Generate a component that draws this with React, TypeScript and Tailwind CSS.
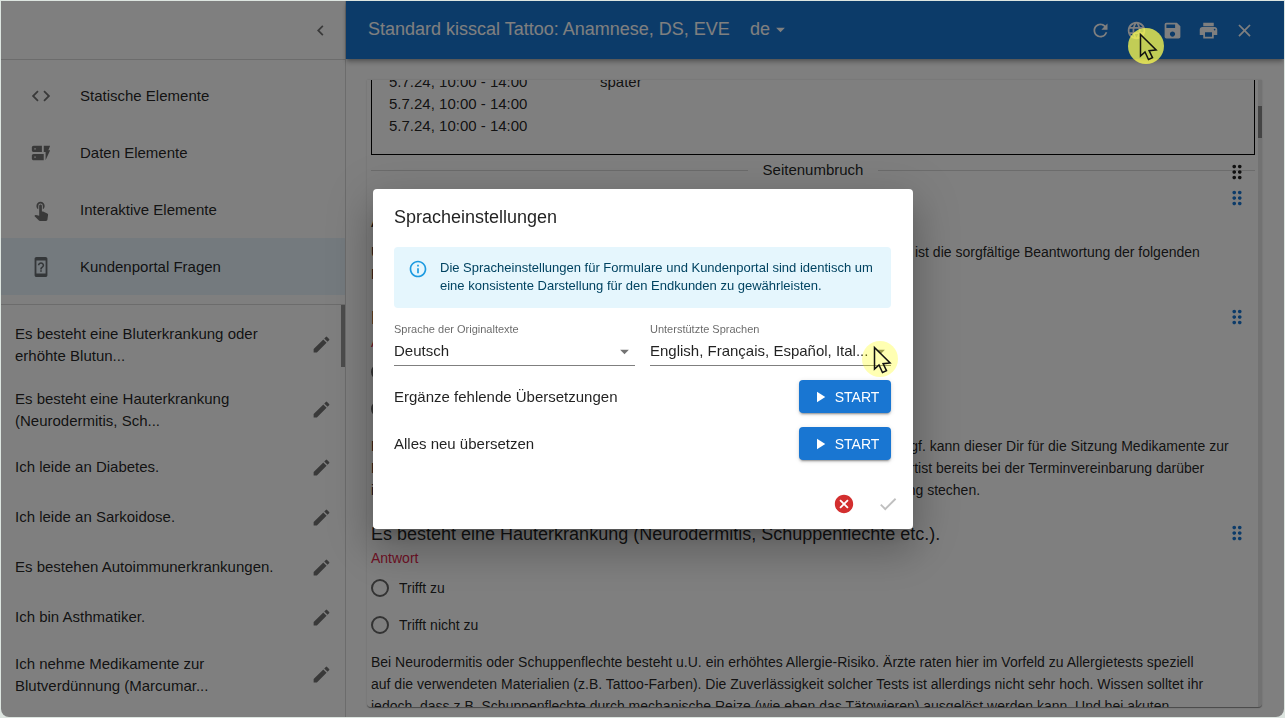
import { ReactNode } from "react";
import {
  MdArrowDropDown,
  MdCancel,
  MdCheck,
  MdChevronLeft,
  MdClose,
  MdCode,
  MdDeviceUnknown,
  MdDragIndicator,
  MdDynamicForm,
  MdEdit,
  MdInfoOutline,
  MdLanguage,
  MdPlayArrow,
  MdPrint,
  MdRefresh,
  MdSave,
  MdTouchApp,
} from "react-icons/md";

const NAV = [
  { label: "Statische Elemente", icon: MdCode },
  { label: "Daten Elemente", icon: MdDynamicForm },
  { label: "Interaktive Elemente", icon: MdTouchApp },
  { label: "Kundenportal Fragen", icon: MdDeviceUnknown, active: true },
];

const QUESTIONS = [
  "Es besteht eine Bluterkrankung oder erhöhte Blutun...",
  "Es besteht eine Hauterkrankung (Neurodermitis, Sch...",
  "Ich leide an Diabetes.",
  "Ich leide an Sarkoidose.",
  "Es bestehen Autoimmunerkrankungen.",
  "Ich bin Asthmatiker.",
  "Ich nehme Medikamente zur Blutverdünnung (Marcumar...",
];

function Pointer({ className }: { className: string }) {
  return (
    <span className={`pointer-events-none absolute z-30 size-9 rounded-full ${className}`}>
      <svg viewBox="0 0 36 36" className="size-9 overflow-visible" fill="none" stroke="#111" strokeWidth="1.5">
        <path d="M12.5 6.5v21.5l4.5-4 3.5 7.5 4-1.8-3.4-7 7-.7z" />
      </svg>
    </span>
  );
}

function Sidebar() {
  return (
    <aside className="flex w-[345px] shrink-0 flex-col border-r border-black/15">
      <div className="flex h-[59px] shrink-0 items-center justify-end border-b border-black/15 pr-3.5">
        <button aria-label="Einklappen" className="text-black/55">
          <MdChevronLeft size={21} />
        </button>
      </div>
      <nav className="shrink-0 border-b border-black/15 pt-[7px] pb-[9px]">
        {NAV.map(({ label, icon: Icon, active }) => (
          <a
            key={label}
            href="#"
            className={`flex h-[57px] items-center gap-7 pl-[29px] ${active ? "bg-[#e8f4fd]" : ""}`}
          >
            <Icon size={22} className="text-black/55" />
            {label}
          </a>
        ))}
      </nav>
      <div className="flex min-h-0 flex-1">
        <ul className="min-w-0 flex-1 overflow-hidden pt-[7px]">
          {QUESTIONS.map((q, i) => (
            <li
              key={q}
              className={`flex items-center justify-between pr-[9px] pl-3.5 ${q.length > 40 ? "h-[65px]" : "h-[50px]"}`}
            >
              <span className="w-[265px]">{q}</span>
              <button aria-label={`Frage ${i + 1} bearbeiten`} className="text-black/55">
                <MdEdit size={21} />
              </button>
            </li>
          ))}
        </ul>
        <div className="w-1">
          <div className="h-[62px] bg-black/40" />
        </div>
      </div>
    </aside>
  );
}

function Header() {
  return (
    <header className="relative flex h-[58px] shrink-0 items-center bg-[#1976d2] pr-[22px] pl-[22px] text-white shadow-[0_2px_4px_-1px_rgba(0,0,0,0.3),0_4px_5px_rgba(0,0,0,0.16)]">
      <h1 className="pb-0.5 text-lg font-medium">Standard kisscal Tattoo: Anamnese, DS, EVE</h1>
      <button className="ml-5 flex items-center pb-0.5 text-lg font-medium">
        de <MdArrowDropDown size={21} />
      </button>
      <div className="ml-auto flex">
        <button aria-label="Neu laden" className="flex size-9 items-center justify-center">
          <MdRefresh size={21} />
        </button>
        <button aria-label="Sprache" className="relative flex size-9 items-center justify-center">
          <MdLanguage size={21} />
          <Pointer className="top-4 left-2.5 bg-[#ffff50]/75" />
        </button>
        <button aria-label="Speichern" className="flex size-9 items-center justify-center">
          <MdSave size={21} />
        </button>
        <button aria-label="Drucken" className="flex size-9 items-center justify-center">
          <MdPrint size={21} />
        </button>
        <button aria-label="Schließen" className="flex size-9 items-center justify-center">
          <MdClose size={21} />
        </button>
      </div>
    </header>
  );
}

function DragHandle({ className }: { className: string }) {
  return (
    <button aria-label="Verschieben" className={`absolute right-[7px] ${className}`}>
      <MdDragIndicator size={22} />
    </button>
  );
}

function Question({ name, title, children }: { name: string; title: string; children: ReactNode }) {
  return (
    <section className="relative mb-5">
      <DragHandle className="top-px text-[#1976d2]" />
      <h2 className="text-lg leading-[26px]">{title}</h2>
      <fieldset className="text-sm leading-[22px]">
        <legend className="text-[#e0264b]">Antwort</legend>
        {["Trifft zu", "Trifft nicht zu"].map((option) => (
          <label key={option} className="flex h-[37px] items-center gap-2.5">
            <input
              type="radio"
              name={name}
              className="size-[18px] appearance-none rounded-full border-2 border-black/60"
            />
            {option}
          </label>
        ))}
      </fieldset>
      <p className="mt-2 text-sm leading-[22px] whitespace-nowrap">{children}</p>
    </section>
  );
}

function FormPreview() {
  return (
    <main className="flex min-h-0 flex-1 pt-[21px] pr-[22px] pb-[9px] pl-[21px]">
      <div className="flex min-w-0 flex-1 overflow-hidden rounded-b border-b border-black/40 shadow-[0_0_2px_rgba(0,0,0,0.2)]">
        <div className="min-w-0 flex-1 overflow-hidden pr-[3px] pl-1">
          <div className="-mt-2.5 grid grid-cols-[211px_1fr] border border-black pb-[17px] pl-[17px]">
            <div>
              <p>5.7.24, 10:00 - 14:00</p>
              <p>5.7.24, 10:00 - 14:00</p>
              <p>5.7.24, 10:00 - 14:00</p>
            </div>
            <p>später</p>
          </div>
          <div className="relative flex h-[30px] items-center gap-[15px]">
            <div className="h-px flex-1 bg-black/15" />
            Seitenumbruch
            <div className="h-px flex-1 bg-black/15" />
            <DragHandle className="top-1.5" />
          </div>
          <section className="relative mb-5 pt-[23px]">
            <DragHandle className="top-0.5 text-[#1976d2]" />
            <h2 className="text-lg leading-[26px]">Anamnese</h2>
            <p className="mt-[7px] text-sm leading-[22px] whitespace-nowrap">
              Um Deine Gesundheit zu schützen und jedes Risiko bei der Behandlung zu vermeiden, ist die sorgfältige
              Beantwortung der folgenden
              <br />
              Fragen erforderlich.
            </p>
          </section>
          <Question name="blut" title="Es besteht eine Bluterkrankung oder erhöhte Blutungsneigung.">
            Bitte besprich Dein Vorhaben unbedingt vorab immer mit Deinem behandelnden Arzt, ggf. kann dieser Dir für
            die Sitzung Medikamente zur
            <br />
            Blutgerinnung verschreiben. In jedem Falle solltest Du immer unbedingt auch Deinen Artist bereits bei der
            Terminvereinbarung darüber
            <br />
            informieren. Ohne diese Freigaben können wir Dir sonst leider keine weitere Tätowierung stechen.
          </Question>
          <Question name="haut" title="Es besteht eine Hauterkrankung (Neurodermitis, Schuppenflechte etc.).">
            Bei Neurodermitis oder Schuppenflechte besteht u.U. ein erhöhtes Allergie-Risiko. Ärzte raten hier im
            Vorfeld zu Allergietests speziell
            <br />
            auf die verwendeten Materialien (z.B. Tattoo-Farben). Die Zuverlässigkeit solcher Tests ist allerdings
            nicht sehr hoch. Wissen solltet ihr
            <br />
            jedoch, dass z.B. Schuppenflechte durch mechanische Reize (wie eben das Tätowieren) ausgelöst werden
            kann. Und bei akuten
          </Question>
        </div>
        <div className="w-1 bg-black/10 pt-[26px]">
          <div className="h-8 bg-black/40" />
        </div>
      </div>
    </main>
  );
}

function SelectField({ id, label, value, children }: { id: string; label: string; value: string; children?: ReactNode }) {
  return (
    <div className="relative min-w-0 flex-1">
      <label htmlFor={id} className="block text-[11px] leading-4 text-black/60">
        {label}
      </label>
      <div className="flex items-center border-b border-black/50">
        <select id={id} className="h-7 min-w-0 flex-1 appearance-none truncate">
          <option>{value}</option>
        </select>
        <MdArrowDropDown size={21} className="shrink-0 text-black/55" />
      </div>
      {children}
    </div>
  );
}

function StartRow({ label }: { label: string }) {
  return (
    <div className="mt-3.5 flex h-[33px] items-center justify-between">
      <span>{label}</span>
      <button className="flex h-full w-[92px] items-center justify-center gap-1.5 rounded bg-[#1976d2] text-sm font-medium text-white shadow-[0_3px_1px_-2px_rgba(0,0,0,0.2),0_2px_2px_rgba(0,0,0,0.14),0_1px_5px_rgba(0,0,0,0.12)]">
        <MdPlayArrow size={18} />
        START
      </button>
    </div>
  );
}

function LanguageDialog() {
  return (
    <div className="fixed inset-0 z-20 flex items-center justify-center pl-px">
      <div
        role="dialog"
        aria-labelledby="dialog-title"
        className="w-[540px] rounded bg-white py-3.5 pr-[22px] pl-[21px] shadow-[0_11px_15px_-7px_rgba(0,0,0,0.2),0_24px_38px_3px_rgba(0,0,0,0.14),0_9px_46px_8px_rgba(0,0,0,0.12)]"
      >
        <h2 id="dialog-title" className="text-lg">
          Spracheinstellungen
        </h2>
        <div className="mt-4 flex gap-3 rounded bg-[#e5f6fd] px-3.5 py-3 text-[13px] leading-[18px] text-[#014361]">
          <MdInfoOutline size={20} className="shrink-0 text-[#1c9ae0]" />
          <p className="pb-px">
            Die Spracheinstellungen für Formulare und Kundenportal sind identisch um
            <br />
            eine konsistente Darstellung für den Endkunden zu gewährleisten.
          </p>
        </div>
        <div className="mt-[13px] flex gap-[15px]">
          <SelectField id="source" label="Sprache der Originaltexte" value="Deutsch" />
          <SelectField id="targets" label="Unterstützte Sprachen" value="English, Français, Español, Ital...">
            <Pointer className="top-5 -right-[7px] bg-[#ffff00]/30" />
          </SelectField>
        </div>
        <StartRow label="Ergänze fehlende Übersetzungen" />
        <StartRow label="Alles neu übersetzen" />
        <div className="mt-[33px] -mr-2 flex justify-end gap-[22px]">
          <button aria-label="Abbrechen" className="text-[#d32f2f]">
            <MdCancel size={22} />
          </button>
          <button aria-label="Übernehmen" className="text-black/25">
            <MdCheck size={22} />
          </button>
        </div>
      </div>
    </div>
  );
}

export default function App() {
  return (
    <div className="h-screen bg-[#dde5e0] px-px pt-px pb-px font-['Liberation_Sans',Arial,sans-serif] text-[15px] leading-[22px] text-black/87">
      <div className="relative flex h-full overflow-hidden rounded-b-lg bg-white">
        <Sidebar />
        <div className="flex min-w-0 flex-1 flex-col">
          <Header />
          <FormPreview />
        </div>
        <div className="absolute inset-0 z-10 bg-black/50" />
      </div>
      <LanguageDialog />
    </div>
  );
}
